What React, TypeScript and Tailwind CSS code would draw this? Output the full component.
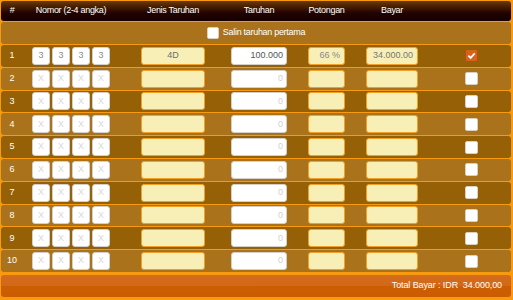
import React from "react";

const font = { fontFamily: '"Liberation Sans", Arial, sans-serif' };

function Check({ checked }: { checked?: boolean }) {
  if (checked) {
    return (
      <div className="w-[13px] h-[13px] rounded-[2px] bg-[#d8621a] border border-[#b84d0c] flex items-center justify-center">
        <svg width="9" height="9" viewBox="0 0 10 10">
          <path d="M1.5 5.2 L4 7.6 L8.6 2.6" fill="none" stroke="#fff" strokeWidth="2" />
        </svg>
      </div>
    );
  }
  return <div className="w-[13px] h-[13px] rounded-[2px] bg-white border border-[#d9d0c0]" />;
}

function Row({ n, first }: { n: number; first?: boolean }) {
  const dark = n % 2 === 1;
  const digits = first ? ["3", "3", "3", "3"] : ["X", "X", "X", "X"];
  return (
    <div
      className={`flex-1 flex items-center rounded-[3px] text-[9px] ${
        dark ? "bg-[#966106]" : "bg-[#a9721b]"
      }`}
    >
      <div className="w-[22px] text-center text-white">{n}</div>
      <div className="ml-[9px] flex gap-[2px]">
        {digits.map((d, i) => (
          <div
            key={i}
            className={`w-[18px] h-[18px] rounded-[3px] bg-white border border-[#d4cfc8] flex items-center justify-center ${
              first ? "text-[#8a8a8a]" : "text-[#d8d8d8]"
            }`}
          >
            {d}
          </div>
        ))}
      </div>
      <div className="ml-[31px] w-[64px] h-[18px] rounded-[3px] bg-[#f7efb6] border border-[#f0a12a] flex items-center justify-center text-[#6e6e6e]">
        {first ? "4D" : ""}
      </div>
      <div
        className={`ml-[26px] w-[56px] h-[18px] rounded-[3px] bg-white border border-[#d4cfc8] flex items-center justify-end pr-[3px] ${
          first ? "text-[#555]" : "text-[#d0d0d0]"
        }`}
      >
        {first ? "100.000" : "0"}
      </div>
      <div className="ml-[21px] w-[37px] h-[18px] rounded-[3px] bg-[#f7efb6] border border-[#f0a12a] flex items-center justify-end pr-[4px] text-[#888]">
        {first ? "66 %" : ""}
      </div>
      <div className="ml-[21px] w-[52px] h-[18px] rounded-[3px] bg-[#f7efb6] border border-[#f0a12a] flex items-center justify-end pr-[4px] text-[#777]">
        {first ? "34.000.00" : ""}
      </div>
      <div className="ml-[47px]">
        <Check checked={first} />
      </div>
    </div>
  );
}

export default function App() {
  return (
    <div style={font} className="w-[513px] h-[300px] bg-[#f79a10] pt-px pl-px pr-[2px] flex flex-col overflow-hidden">
      <div className="h-[20px] rounded-[3px] bg-gradient-to-b from-[#6b3a08] via-[#220400] via-60% to-[#160000] flex items-center text-white text-[9px] tracking-[-0.3px]">
        <div className="w-[22px] text-center">#</div>
        <div className="ml-[9px] w-[78px] text-center">Nomor (2-4 angka)</div>
        <div className="ml-[31px] w-[64px] text-center">Jenis Taruhan</div>
        <div className="ml-[26px] w-[56px] text-center">Taruhan</div>
        <div className="ml-[21px] w-[37px] text-center">Potongan</div>
        <div className="ml-[21px] w-[52px] text-center">Bayar</div>
      </div>
      <div className="mt-px h-[22px] rounded-[3px] bg-[#a9721b] flex items-center justify-center gap-[4px] text-white text-[9px] tracking-[-0.3px]">
        <div className="w-[12px] h-[12px] rounded-[2px] bg-white border border-[#d9d0c0]" />
        <span>Salin taruhan pertama</span>
      </div>
      <div className="mt-px h-[227px] flex flex-col gap-px">
        {Array.from({ length: 10 }, (_, i) => (
          <Row key={i} n={i + 1} first={i === 0} />
        ))}
      </div>
      <div className="mt-[3px] h-[22px] rounded-[3px] bg-[linear-gradient(to_bottom,#d46c1c_0%,#d26818_50%,#cc5e02_50%,#cb5d00_100%)] flex items-center justify-end pr-[9px] text-white text-[9px] tracking-[-0.1px]">
        Total Bayar : IDR&nbsp; 34.000,00
      </div>
    </div>
  );
}
